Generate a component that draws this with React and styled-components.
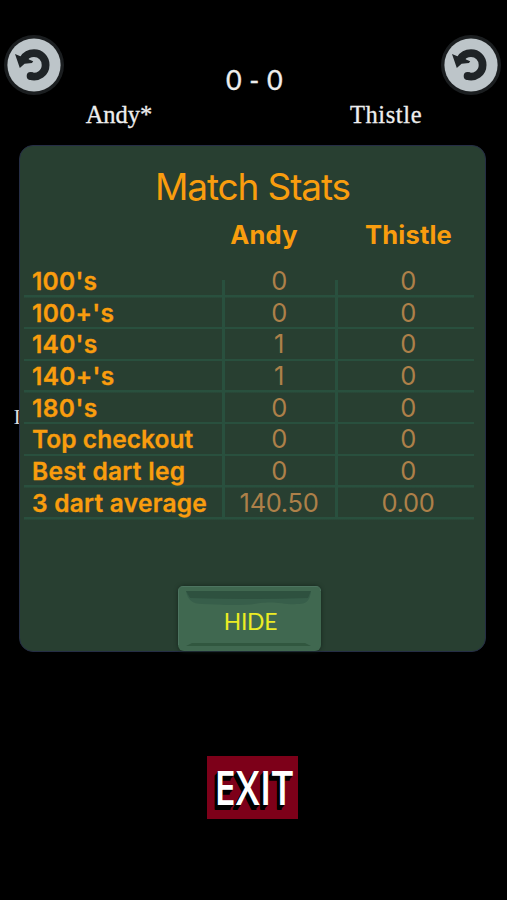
import React from 'react'
import styled, { createGlobalStyle } from 'styled-components'

const stats = [
	{ label: "100's", home: '0', away: '0', spacing: '0.25px' },
	{ label: "100+'s", home: '0', away: '0', spacing: '0.3px' },
	{ label: "140's", home: '1', away: '0', spacing: '0.25px' },
	{ label: "140+'s", home: '1', away: '0', spacing: '0.3px' },
	{ label: "180's", home: '0', away: '0', spacing: '0.4px' },
	{ label: 'Top checkout', home: '0', away: '0', spacing: '0.05px' },
	{ label: 'Best dart leg', home: '0', away: '0', spacing: '0.3px' },
	{ label: '3 dart average', home: '140.50', away: '0.00', spacing: '0.25px' },
]

const UndoButton = () => (
	<RoundButton type="button" aria-label="undo">
		<svg width="60" height="62" viewBox="0 0 60 62">
			<circle cx="30" cy="30" r="30" fill="#1b1e20" />
			<circle cx="30" cy="30" r="26.6" fill="#bdc5c9" />
			<path
				d="M26.4 41C34 43.2 41.6 38 41.6 29.9C41.6 23 36.5 18.2 30 18.2C25 18.2 21.5 20.5 19.5 24"
				fill="none"
				stroke="#1f2427"
				strokeWidth="7.8"
			/>
			<circle cx="26.6" cy="41" r="3.9" fill="#1f2427" />
			<path d="M11 19L17 21.6L23 22L25 24.6L29.2 26.2L28 28L20.6 28.8L15.8 33Z" fill="#1f2427" />
		</svg>
	</RoundButton>
)

const App = () => {
	return (
		<Screen>
			<GlobalStyle />
			<Header>
				<UndoButton />
				<Score>0 - 0</Score>
				<UndoButton />
			</Header>
			<Players>
				<Player>Andy*</Player>
				<Player $spacing="0.6px">Thistle</Player>
			</Players>
			<PanelArea>
				<HiddenText>I</HiddenText>
				<Panel>
					<Title>Match Stats</Title>
					<Heads>
						<Head />
						<Head $shift="-32px">Andy</Head>
						<Head $shift="6px">Thistle</Head>
					</Heads>
					<Table>
						{stats.map(({ label, home, away, spacing }) => (
							<Row key={label}>
								<Label $spacing={spacing}>{label}</Label>
								<Value>{home}</Value>
								<Value $shift="7px">{away}</Value>
							</Row>
						))}
					</Table>
					<HideButton type="button">
						<svg width="143" height="65" viewBox="0 0 143 65">
							<path d="M0.5 59V5Q0.5 0.5 5 0.5H138Q142.5 0.5 142.5 5" fill="none" stroke="#4d7460" />
							<path d="M8 5H133Q132 18 121 18C105 19 100 15 82 17C60 21 40 18 24 18Q10 18 8 5Z" fill="#375e4a" />
							<path d="M8 5H133L130 12Q72 14 12 12Z" fill="#2e513f" />
							<path d="M8 60L14 57H127L133 60Z" fill="#31573f" />
						</svg>
						<span>HIDE</span>
					</HideButton>
				</Panel>
			</PanelArea>
			<ExitButton type="button">
				<span>EXIT</span>
			</ExitButton>
		</Screen>
	)
}

const GlobalStyle = createGlobalStyle`
	* {
		box-sizing: border-box;
	}
	body {
		margin: 0;
		background: #000;
	}
	button {
		display: block;
		border: none;
		padding: 0;
		cursor: pointer;
	}
`

const Screen = styled.div`
	display: flex;
	flex-direction: column;
	align-items: center;
	width: 507px;
	height: 900px;
	padding-top: 35px;
	background: #000;
	overflow: hidden;
`

const Header = styled.header`
	display: flex;
	justify-content: space-between;
	width: 100%;
	height: 65px;
	padding: 0 6px 0 4px;
`

const RoundButton = styled.button`
	width: 60px;
	height: 62px;
	background: transparent;
	svg {
		display: block;
	}
`

const Score = styled.div`
	padding: 29px 0 0 4px;
	color: #eee;
	font: 400 27px/32px Lato, sans-serif;
	letter-spacing: 0.4px;
	-webkit-text-stroke: 0.3px #eee;
`

const Players = styled.div`
	display: grid;
	grid-template-columns: 238px 1fr;
	width: 100%;
	height: 45px;
	& > :last-child {
		padding-left: 27px;
	}
`

const Player = styled.div`
	text-align: center;
	color: #eee;
	font: 400 24.5px/30px 'Liberation Serif', serif;
	letter-spacing: ${(props) => props.$spacing || 'normal'};
	-webkit-text-stroke: 0.3px #eee;
`

const PanelArea = styled.main`
	position: relative;
	width: 467px;
	margin-right: 2px;
`

const HiddenText = styled.span`
	position: absolute;
	left: -5.5px;
	top: 258px;
	color: #ddd;
	font: 400 22px/28px 'Liberation Serif', serif;
`

const Panel = styled.section`
	position: relative;
	display: flex;
	flex-direction: column;
	align-items: center;
	height: 507px;
	border: 1px solid #252d45;
	border-radius: 14px;
	background: #283f31;
	font-family: Inter, sans-serif;
`

const Title = styled.h1`
	margin: 19px 0 0;
	color: #f99d0e;
	font-size: 37px;
	line-height: 44px;
	font-weight: 400;
	letter-spacing: -1.15px;
`

const Heads = styled.div`
	display: grid;
	grid-template-columns: 199px 114px 137px;
	width: 450px;
	margin-right: 7px;
	padding-top: 10px;
	height: 56px;
`

const Head = styled.div`
	text-align: center;
	margin-left: ${(props) => props.$shift || 0};
	color: #f99d0e;
	font-size: 25.5px;
	line-height: 32px;
	font-weight: 700;
	letter-spacing: 0.2px;
`

const Table = styled.div`
	width: 450px;
	margin-right: 7px;
	padding-top: 1px;
	background:
		linear-gradient(#29503e, #29503e) 198px 15px / 3px 237px no-repeat,
		linear-gradient(#29503e, #29503e) 311px 15px / 3px 237px no-repeat;
`

const Row = styled.div`
	display: grid;
	grid-template-columns: 199px 114px 137px;
	height: 31.7px;
	background: linear-gradient(#29503e, #29503e) 0 100% / 100% 2.5px no-repeat;
`

const Label = styled.div`
	padding-left: 8px;
	color: #f99d0e;
	font-size: 24.5px;
	line-height: 30px;
	font-weight: 600;
	-webkit-text-stroke: 0.3px #f99d0e;
	white-space: nowrap;
	letter-spacing: ${(props) => props.$spacing || 'normal'};
`

const Value = styled.div`
	padding: 0 2px 0 ${(props) => props.$shift || 0};
	text-align: center;
	color: #ad8049;
	font-size: 25.5px;
	line-height: 30px;
	font-weight: 400;
	letter-spacing: -0.35px;
`

const HideButton = styled.button`
	position: relative;
	width: 143px;
	height: 65px;
	margin: auto 6px 0 0;
	border-radius: 6px;
	background: #406850;
	box-shadow: 0 0 4px #14261c;
	svg {
		position: absolute;
		left: 0;
		top: 0;
	}
	span {
		position: relative;
		display: block;
		padding: 5px 0 0 2px;
		color: #ecec24;
		font: 400 24px/30px Lato, sans-serif;
		letter-spacing: -0.3px;
		transform: scaleX(0.95);
	}
`

const ExitButton = styled.button`
	width: 91px;
	height: 63px;
	margin: 104px 2px 0 0;
	background: #7d0019;
	span {
		display: block;
		margin-left: -1px;
		color: #fff;
		font: 600 47px/63px 'Open Sans', sans-serif;
		text-shadow: -1px 1px #000, -2px 2px #000, -3px 3px #000, -4px 4px #000, -4px 5px #000;
		transform: scaleX(0.82);
	}
`

export default App
